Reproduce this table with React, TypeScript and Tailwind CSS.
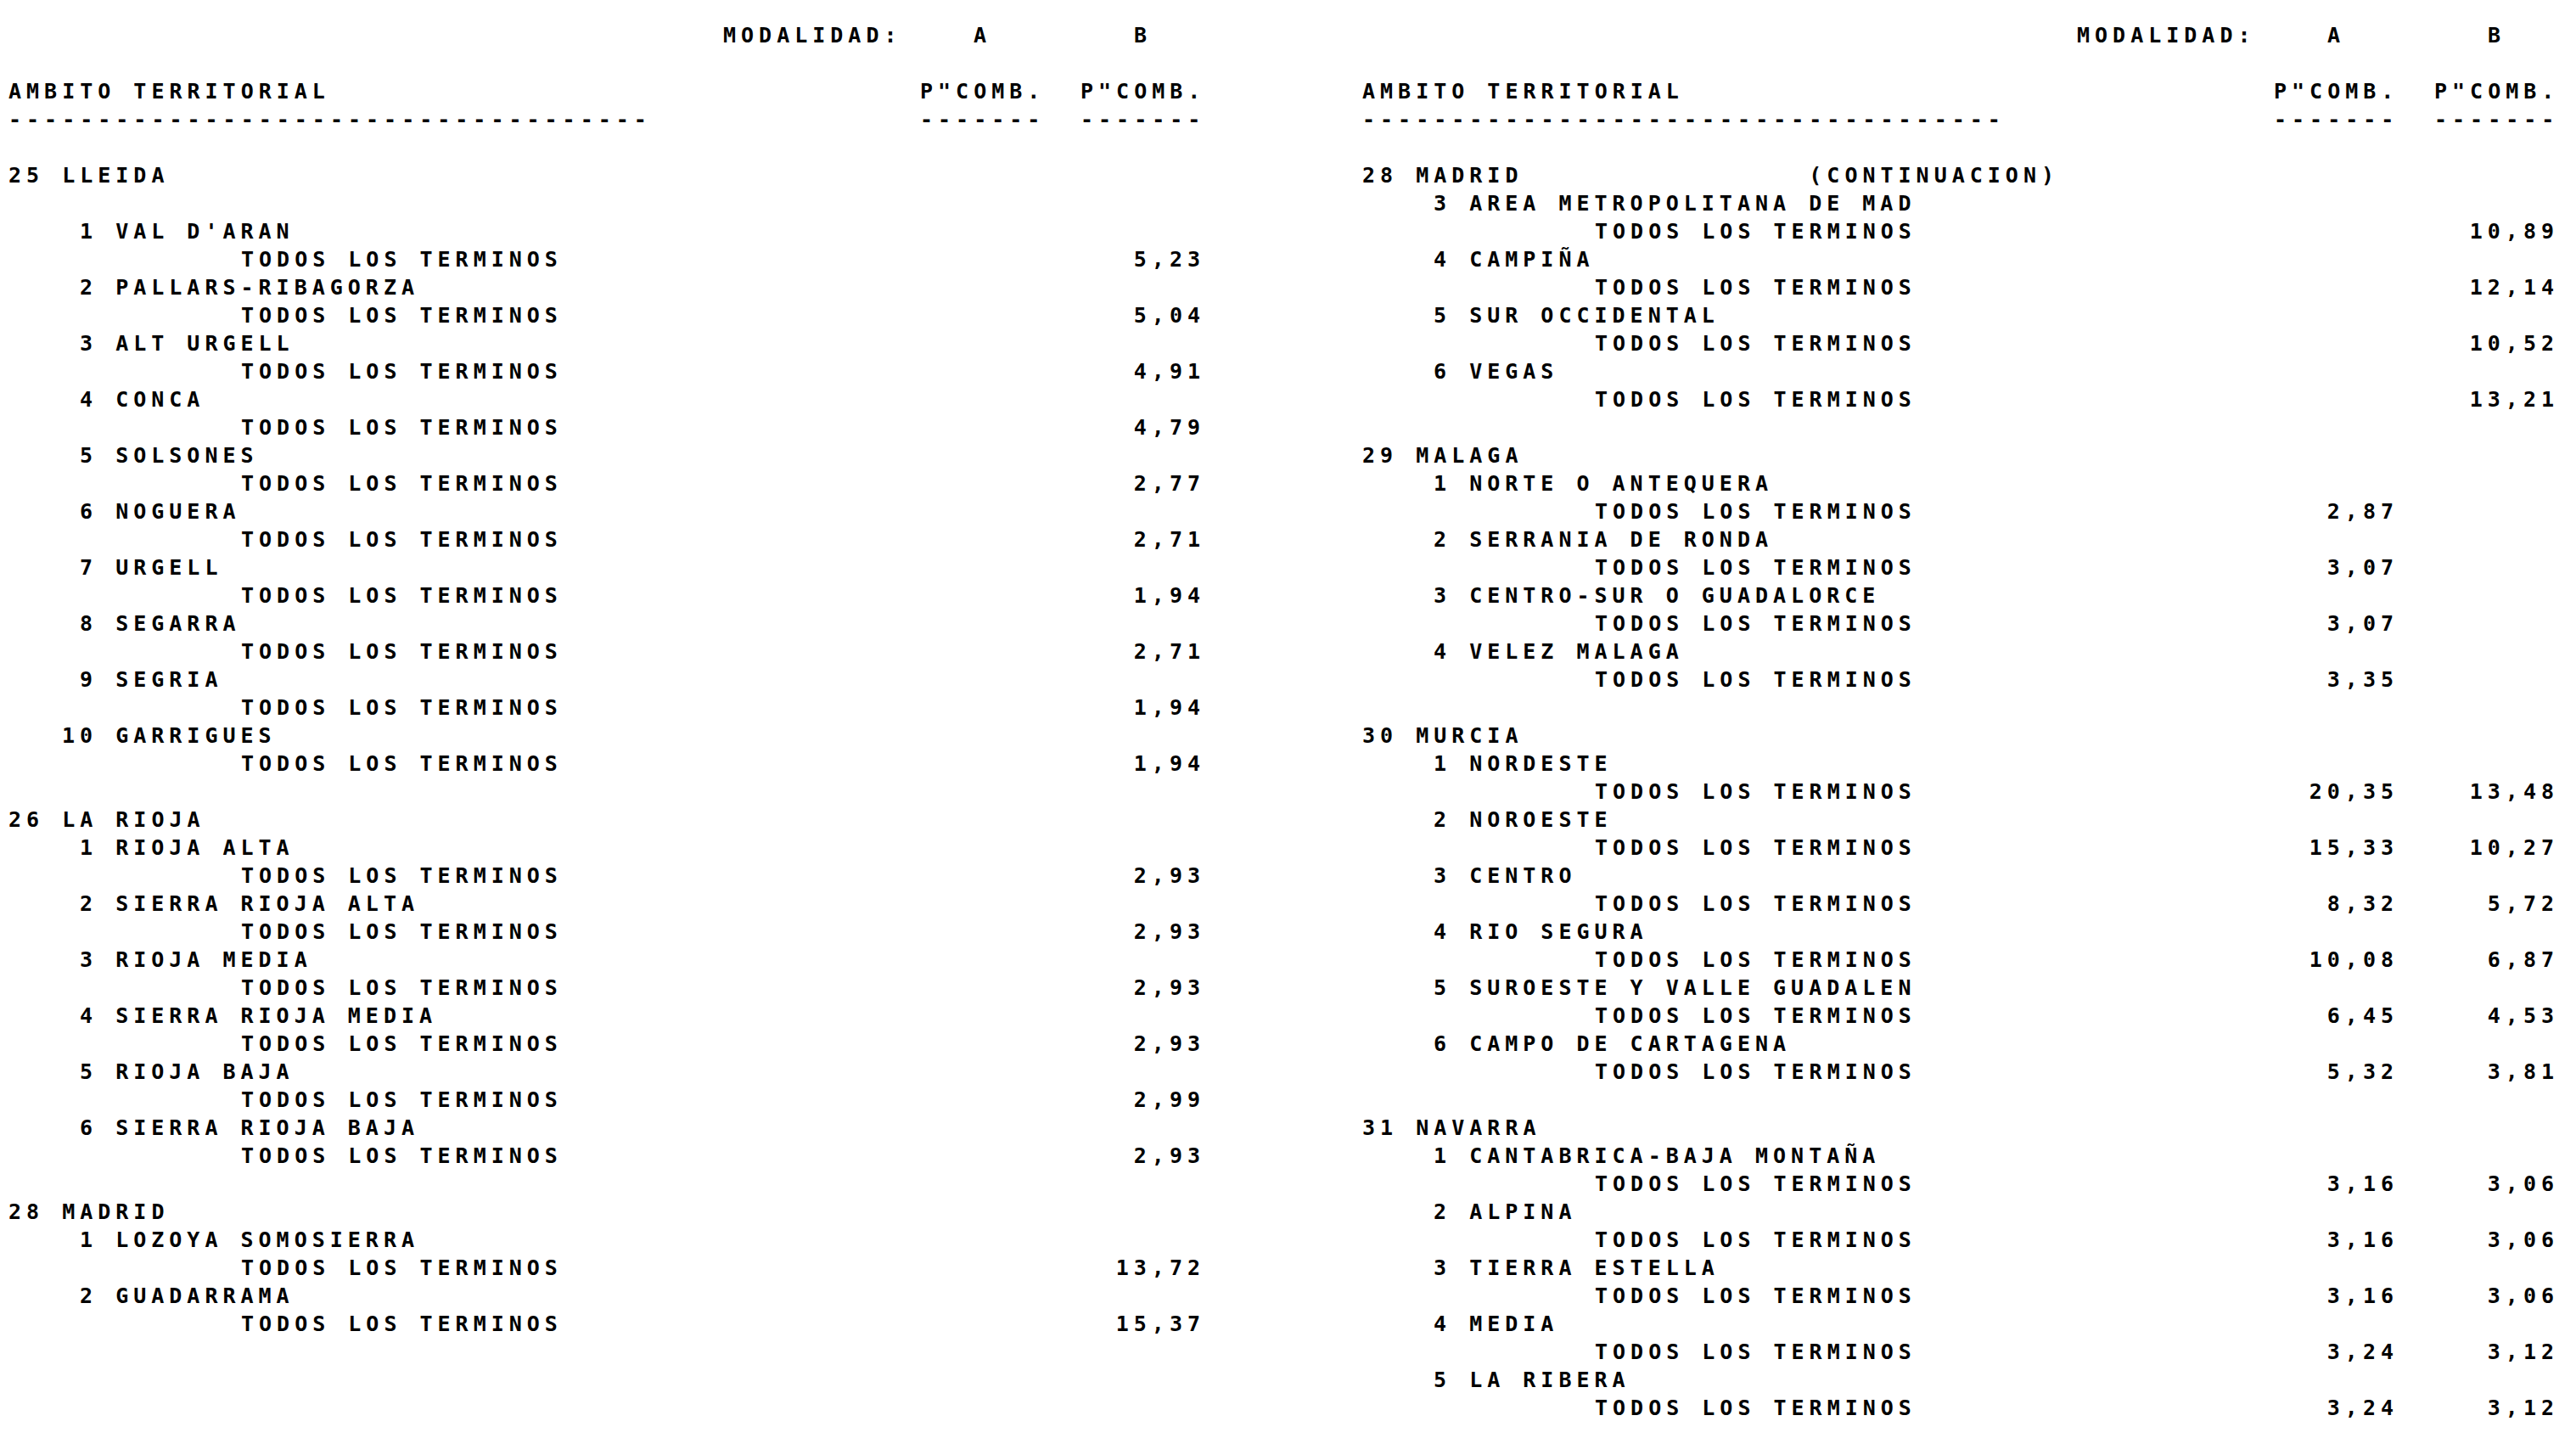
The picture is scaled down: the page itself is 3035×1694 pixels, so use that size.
type Item = { n: string; name: string; a?: string; b?: string };
type Section = { code: string; name: string; note?: string; gap?: boolean; items: Item[] };

const left: Section[] = [
  {
    code: '25',
    name: 'LLEIDA',
    gap: true,
    items: [
      { n: '1', name: "VAL D'ARAN", b: '5,23' },
      { n: '2', name: 'PALLARS-RIBAGORZA', b: '5,04' },
      { n: '3', name: 'ALT URGELL', b: '4,91' },
      { n: '4', name: 'CONCA', b: '4,79' },
      { n: '5', name: 'SOLSONES', b: '2,77' },
      { n: '6', name: 'NOGUERA', b: '2,71' },
      { n: '7', name: 'URGELL', b: '1,94' },
      { n: '8', name: 'SEGARRA', b: '2,71' },
      { n: '9', name: 'SEGRIA', b: '1,94' },
      { n: '10', name: 'GARRIGUES', b: '1,94' },
    ],
  },
  {
    code: '26',
    name: 'LA RIOJA',
    items: [
      { n: '1', name: 'RIOJA ALTA', b: '2,93' },
      { n: '2', name: 'SIERRA RIOJA ALTA', b: '2,93' },
      { n: '3', name: 'RIOJA MEDIA', b: '2,93' },
      { n: '4', name: 'SIERRA RIOJA MEDIA', b: '2,93' },
      { n: '5', name: 'RIOJA BAJA', b: '2,99' },
      { n: '6', name: 'SIERRA RIOJA BAJA', b: '2,93' },
    ],
  },
  {
    code: '28',
    name: 'MADRID',
    items: [
      { n: '1', name: 'LOZOYA SOMOSIERRA', b: '13,72' },
      { n: '2', name: 'GUADARRAMA', b: '15,37' },
    ],
  },
];

const right: Section[] = [
  {
    code: '28',
    name: 'MADRID',
    note: '(CONTINUACION)',
    items: [
      { n: '3', name: 'AREA METROPOLITANA DE MAD', b: '10,89' },
      { n: '4', name: 'CAMPIÑA', b: '12,14' },
      { n: '5', name: 'SUR OCCIDENTAL', b: '10,52' },
      { n: '6', name: 'VEGAS', b: '13,21' },
    ],
  },
  {
    code: '29',
    name: 'MALAGA',
    items: [
      { n: '1', name: 'NORTE O ANTEQUERA', a: '2,87' },
      { n: '2', name: 'SERRANIA DE RONDA', a: '3,07' },
      { n: '3', name: 'CENTRO-SUR O GUADALORCE', a: '3,07' },
      { n: '4', name: 'VELEZ MALAGA', a: '3,35' },
    ],
  },
  {
    code: '30',
    name: 'MURCIA',
    items: [
      { n: '1', name: 'NORDESTE', a: '20,35', b: '13,48' },
      { n: '2', name: 'NOROESTE', a: '15,33', b: '10,27' },
      { n: '3', name: 'CENTRO', a: '8,32', b: '5,72' },
      { n: '4', name: 'RIO SEGURA', a: '10,08', b: '6,87' },
      { n: '5', name: 'SUROESTE Y VALLE GUADALEN', a: '6,45', b: '4,53' },
      { n: '6', name: 'CAMPO DE CARTAGENA', a: '5,32', b: '3,81' },
    ],
  },
  {
    code: '31',
    name: 'NAVARRA',
    items: [
      { n: '1', name: 'CANTABRICA-BAJA MONTAÑA', a: '3,16', b: '3,06' },
      { n: '2', name: 'ALPINA', a: '3,16', b: '3,06' },
      { n: '3', name: 'TIERRA ESTELLA', a: '3,16', b: '3,06' },
      { n: '4', name: 'MEDIA', a: '3,24', b: '3,12' },
      { n: '5', name: 'LA RIBERA', a: '3,24', b: '3,12' },
    ],
  },
];

function Row({ text = '', indent = '', a = '', b = '', center = false }: { text?: string; indent?: string; a?: string; b?: string; center?: boolean }) {
  return (
    <div className="flex h-[33px] whitespace-pre">
      <span className={`flex-1 ${indent}`}>{text}</span>
      <span className={`w-[147px] ${center ? 'text-center' : 'text-right'}`}>{a}</span>
      <span className="w-[42px]" />
      <span className={`w-[147px] ${center ? 'text-center' : 'text-right'}`}>{b}</span>
    </div>
  );
}

function Page({ sections }: { sections: Section[] }) {
  return (
    <div className="w-[1410px] shrink-0">
      <Row text="MODALIDAD:" indent="pl-[842px]" a="A" b="B" center />
      <Row />
      <Row text="AMBITO TERRITORIAL" a={'P"COMB.'} b={'P"COMB.'} />
      <Row text={'-'.repeat(36)} a="-------" b="-------" />
      {sections.map((s) => (
        <div key={s.code + s.name}>
          <Row />
          <Row text={s.note ? `${s.code} ${s.name}`.padEnd(25) + s.note : `${s.code} ${s.name}`} />
          {s.gap && <Row />}
          {s.items.map((it) => (
            <div key={it.n}>
              <Row text={`${it.n.padStart(2)} ${it.name}`} indent="pl-[63px]" />
              <Row text="TODOS LOS TERMINOS" indent="pl-[274px]" a={it.a} b={it.b} />
            </div>
          ))}
        </div>
      ))}
    </div>
  );
}

export default function App() {
  return (
    <div className="min-h-screen w-[3035px] bg-white text-black">
      <div className="flex gap-[185px] pl-[10px] pt-[25px] font-['DejaVu_Sans_Mono',monospace] text-[25px] font-bold leading-[33px] tracking-[6px]">
        <Page sections={left} />
        <Page sections={right} />
      </div>
    </div>
  );
}
